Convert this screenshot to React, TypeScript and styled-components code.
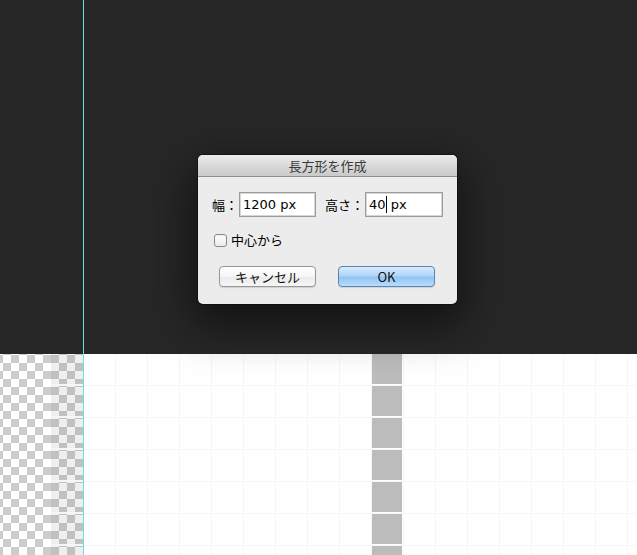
import React from "react";
import styled, { createGlobalStyle } from "styled-components";

const GlobalStyle = createGlobalStyle`
  html, body {
    margin: 0;
    padding: 0;
    background: #272727;
    overflow: hidden;
  }
  body {
    font-family: "DejaVu Sans", "Noto Sans CJK JP", sans-serif;
    -webkit-font-smoothing: antialiased;
  }
`;

const JP = `"Noto Sans CJK JP", "DejaVu Sans", sans-serif`;

export default function App() {
  const blocks = Array.from({ length: 7 });

  return (
    <Screen>
      <GlobalStyle />
      <Column $width={83}>
        <Workspace />
        <CheckerArea>
          <Checker />
          <LayerStrip />
        </CheckerArea>
      </Column>
      <Guide />
      <Column>
        <Workspace />
        <Canvas>
          <BlockColumn>
            {blocks.map((_, i) => (
              <Block key={i} />
            ))}
          </BlockColumn>
        </Canvas>
      </Column>

      <Dialog>
        <TitleBar>長方形を作成</TitleBar>
        <Body>
          <FieldRow>
            <Label>幅：</Label>
            <TextBox $width={77}>1200 px</TextBox>
            <Label $gap={9}>高さ：</Label>
            <TextBox $width={78}>
              40
              <Caret /> px
            </TextBox>
          </FieldRow>
          <CheckRow>
            <CheckBox />
            <span>中心から</span>
          </CheckRow>
          <ButtonRow>
            <Button>キャンセル</Button>
            <Button $primary>OK</Button>
          </ButtonRow>
        </Body>
      </Dialog>
    </Screen>
  );
}

const Screen = styled.div`
  position: relative;
  display: flex;
  width: 637px;
  height: 555px;
  overflow: hidden;
`;

const Column = styled.div<{ $width?: number }>`
  display: flex;
  flex-direction: column;
  ${({ $width }) => ($width ? `width: ${$width}px; flex: none;` : `flex: 1;`)}
`;

const Workspace = styled.div`
  height: 354px;
  flex: none;
  background: #272727;
`;

const CheckerArea = styled.div`
  flex: 1;
  display: flex;
`;

const Checker = styled.div`
  flex: 1;
  background: repeating-conic-gradient(#cccccc 0 25%, #ffffff 0 50%) 3px 1px /
    16px 16px;
`;

const LayerStrip = styled.div`
  width: 32px;
  flex: none;
  background:
    linear-gradient(to bottom, #f6f6f6 2px, transparent 2px) 0 30px / 32px 32px,
    repeating-conic-gradient(#efefef 0 25%, #c1c1c1 0 50%) 0 1px / 16px 16px;
`;

const Guide = styled.div`
  width: 1px;
  flex: none;
  background: #62e3ea;
`;

const Canvas = styled.div`
  flex: 1;
  display: flex;
  padding-left: 288px;
  background-color: #ffffff;
  background-image:
    linear-gradient(to right, #f6f6f6 1px, transparent 1px),
    linear-gradient(to bottom, #f6f6f6 1px, transparent 1px);
  background-size: 32px 32px;
  background-position: 31px 31px;
`;

const BlockColumn = styled.div`
  width: 30px;
  display: flex;
  flex-direction: column;
  gap: 2px;
  overflow: hidden;
`;

const Block = styled.div`
  height: 30px;
  flex: none;
  background: #bcbcbc;
`;

const Dialog = styled.div`
  position: absolute;
  left: 198px;
  top: 155px;
  width: 259px;
  height: 149px;
  box-sizing: border-box;
  background: #ececec;
  border-radius: 5px;
  overflow: hidden;
  box-shadow:
    0 0 0 1px rgba(0, 0, 0, 0.35),
    0 16px 45px 6px rgba(0, 0, 0, 0.55);
  display: flex;
  flex-direction: column;
  font-size: 13px;
  color: #000;
`;

const TitleBar = styled.div`
  height: 21px;
  line-height: 21px;
  flex: none;
  text-align: center;
  font-family: ${JP};
  font-size: 13px;
  color: #3a3a3a;
  background: linear-gradient(#ececec, #d6d6d6 60%, #c9c9c9);
  border-bottom: 1px solid #8f8f8f;
`;

const Body = styled.div`
  display: flex;
  flex-direction: column;
  padding: 15px 15px 0 14px;
`;

const FieldRow = styled.div`
  display: flex;
  align-items: center;
  height: 25px;
`;

const Label = styled.span<{ $gap?: number }>`
  font-family: ${JP};
  font-size: 13px;
  line-height: 25px;
  margin-left: ${({ $gap }) => $gap ?? 0}px;
  margin-right: 1px;
  white-space: nowrap;
`;

const TextBox = styled.div<{ $width: number }>`
  width: ${({ $width }) => $width}px;
  height: 25px;
  box-sizing: border-box;
  flex: none;
  display: flex;
  align-items: center;
  padding-left: 3px;
  background: #ffffff;
  border: 1px solid #9c9c9c;
  box-shadow: inset 0 0 0 1px #d6d6d6;
  font-family: "DejaVu Sans", sans-serif;
  font-size: 13px;
  white-space: pre;
`;

const Caret = styled.span`
  display: inline-block;
  width: 1px;
  height: 17px;
  background: #000;
`;

const CheckRow = styled.div`
  display: flex;
  align-items: center;
  gap: 4px;
  margin-top: 16px;
  margin-left: 2px;
  font-family: ${JP};
  font-size: 13px;
  line-height: 14px;
`;

const CheckBox = styled.span`
  width: 13px;
  height: 13px;
  box-sizing: border-box;
  border: 1px solid #8a8a8a;
  border-radius: 3px;
  background: linear-gradient(#ffffff, #ececec);
  box-shadow: inset 0 1px 1px rgba(0, 0, 0, 0.08);
`;

const ButtonRow = styled.div`
  display: flex;
  gap: 22px;
  margin-top: 19px;
  margin-left: 7px;
`;

const Button = styled.div<{ $primary?: boolean }>`
  width: 97px;
  height: 21px;
  box-sizing: border-box;
  display: flex;
  align-items: center;
  justify-content: center;
  border-radius: 4px;
  font-family: ${JP};
  font-size: 13px;
  color: #111;
  border: 1px solid ${({ $primary }) => ($primary ? "#5b83b3" : "#979797")};
  background: ${({ $primary }) =>
    $primary
      ? "linear-gradient(#d6eafd, #b2d6f8 45%, #92c5f4 55%, #b8dcfb)"
      : "linear-gradient(#ffffff, #f6f6f6 50%, #ebebeb 55%, #f6f6f6)"};
  box-shadow: 0 1px 1px rgba(0, 0, 0, 0.12);
`;
